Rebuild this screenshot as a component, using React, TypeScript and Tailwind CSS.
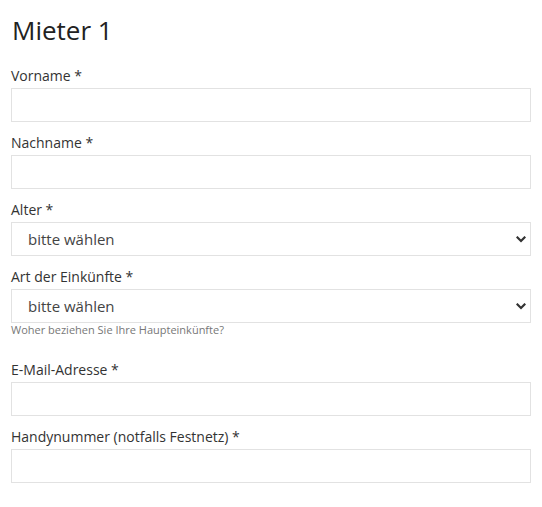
import { ChangeEvent, useState } from 'react'

const font = { fontFamily: '"Open Sans", "Liberation Sans", sans-serif' }

function Field({ label, children }: { label: string; children: React.ReactNode }) {
  return (
    <div className="mb-[11px]">
      <label className="block text-[14px] leading-5 text-[#333] mb-[2px]">{label}</label>
      {children}
    </div>
  )
}

function TextInput() {
  return (
    <input
      type="text"
      className="block w-full h-[34px] border border-[#e2e2e2] bg-white px-3 text-[14px] text-[#333] outline-none"
    />
  )
}

function Select({ value, onChange }: { value: string; onChange: (e: ChangeEvent<HTMLSelectElement>) => void }) {
  return (
    <div className="relative">
      <select
        value={value}
        onChange={onChange}
        className="block w-full h-[34px] appearance-none border border-[#e2e2e2] bg-white pl-[16px] pr-8 text-[15px] text-[#444] outline-none"
      >
        <option value="">bitte wählen</option>
      </select>
      {/* chevron */}
      <svg
        className="pointer-events-none absolute right-[5px] top-[14px]"
        width="10"
        height="7"
        viewBox="0 0 10 7"
      >
        <path d="M1.5 1.5 L5 5 L8.5 1.5" fill="none" stroke="#333" strokeWidth="2.2" strokeLinecap="square" />
      </svg>
    </div>
  )
}

export default function App() {
  const [age, setAge] = useState('')
  const [income, setIncome] = useState('')

  return (
    <div className="min-h-screen bg-white px-[11px] pt-[14px]" style={font}>
      <h1 className="text-[26px] leading-[32px] text-[#222] mb-[20px] pl-[1px]">Mieter 1</h1>

      <Field label="Vorname *">
        <TextInput />
      </Field>

      <Field label="Nachname *">
        <TextInput />
      </Field>

      <Field label="Alter *">
        <Select value={age} onChange={e => setAge(e.target.value)} />
      </Field>

      <div className="mb-[24px]">
        <label className="block text-[14px] leading-5 text-[#333] mb-[2px]">Art der Einkünfte *</label>
        <Select value={income} onChange={e => setIncome(e.target.value)} />
        <p className="text-[11px] leading-[13px] text-[#777]">Woher beziehen Sie Ihre Haupteinkünfte?</p>
      </div>

      <Field label="E-Mail-Adresse *">
        <TextInput />
      </Field>

      <Field label="Handynummer (notfalls Festnetz) *">
        <TextInput />
      </Field>
    </div>
  )
}
